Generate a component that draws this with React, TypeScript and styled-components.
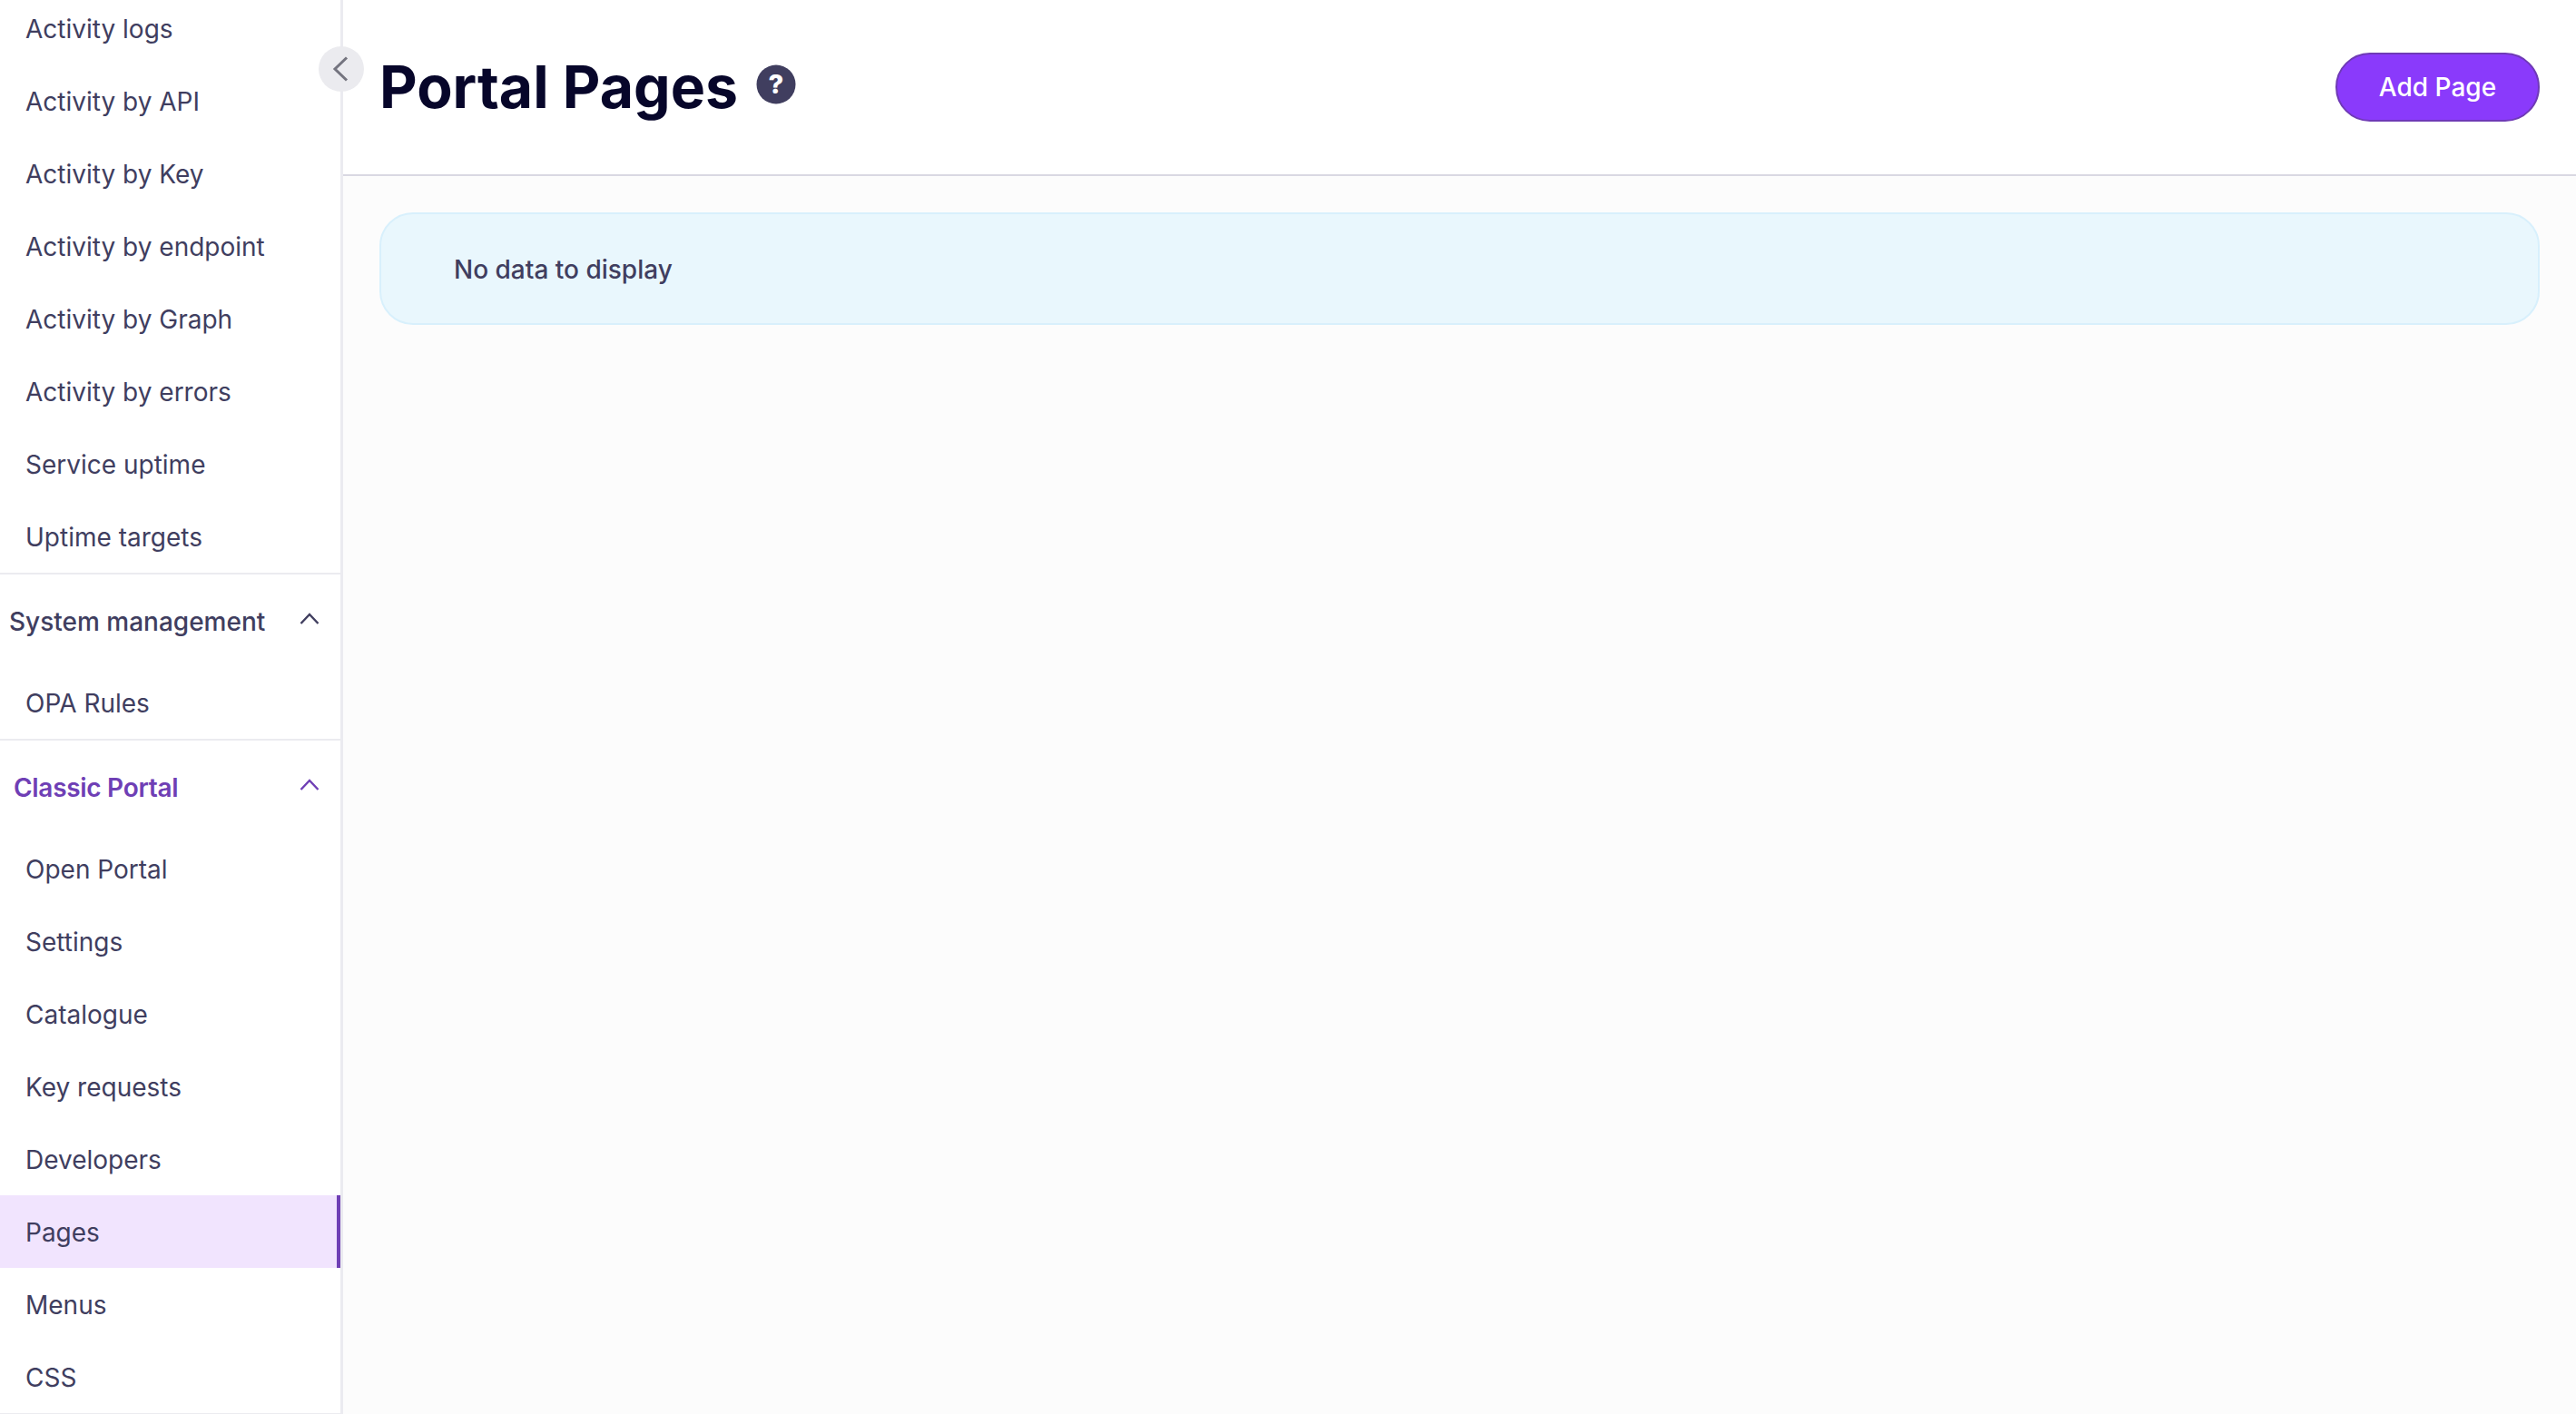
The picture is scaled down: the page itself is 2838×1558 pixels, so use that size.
import React from 'react';
import styled, { createGlobalStyle } from 'styled-components';

const Global = createGlobalStyle`
  html, body { margin: 0; padding: 0; height: 100%; background: #fff; }
  #root { height: 100%; }
  * { box-sizing: border-box; }
`;

const Page = styled.div`
  display: flex;
  width: 100%;
  height: 1558px;
  overflow: hidden;
  font-family: Inter, "Liberation Sans", sans-serif;
  color: #403e5f;
`;

const Sidebar = styled.aside`
  position: relative;
  flex: 0 0 378px;
  height: 100%;
  background: #fff;
  border-right: 3px solid #ebebf0;
`;

const NavScroller = styled.nav`
  height: 100%;
  overflow: hidden;
  border-bottom: 1px solid #ebebf0;
`;

const NavContent = styled.div`
  margin-top: -9px;
`;

const Section = styled.div<{ $divided?: boolean }>`
  border-bottom: ${p => (p.$divided ? '2px solid #ebebf0' : 'none')};
`;

const NavItem = styled.div<{ $active?: boolean }>`
  display: flex;
  align-items: center;
  height: 80px;
  padding: 2px 0 0 28px;
  font-size: 28px;
  font-weight: 400;
  background: ${p => (p.$active ? '#f1e4fe' : 'transparent')};
  border-right: ${p => (p.$active ? '4px solid #6f3fb5' : 'none')};
`;

const SectionHeader = styled.div<{ $accent?: boolean }>`
  display: flex;
  align-items: center;
  justify-content: space-between;
  height: 101px;
  padding: 2px 23px 0 ${p => (p.$accent ? 15 : 10)}px;
  font-size: 28px;
  font-weight: ${p => (p.$accent ? 600 : 500)};
  letter-spacing: ${p => (p.$accent ? '-0.3px' : 'normal')};
  color: ${p => (p.$accent ? '#6f3fb5' : '#403e5f')};
`;

const ChevronIcon = styled.svg`
  display: block;
  margin-top: -6px;
`;

const CollapseButton = styled.button`
  position: absolute;
  top: 51px;
  left: 351px;
  width: 50px;
  height: 50px;
  padding: 0;
  border: none;
  border-radius: 50%;
  background: #ebebef;
  display: flex;
  align-items: center;
  justify-content: center;
`;

const Main = styled.main`
  flex: 1;
  display: flex;
  flex-direction: column;
  min-width: 0;
  background: #fcfcfc;
`;

const Header = styled.header`
  display: flex;
  align-items: center;
  justify-content: space-between;
  height: 194px;
  padding: 0 40px;
  background: #fff;
  border-bottom: 2px solid #d9d8e2;
`;

const TitleGroup = styled.div`
  display: flex;
  align-items: center;
  gap: 20px;
`;

const Title = styled.h1`
  margin: 0;
  font-size: 64.3px;
  font-weight: 700;
  line-height: 1;
  color: #07062a;
`;

const HelpIcon = styled.svg`
  width: 44px;
  height: 44px;
  display: block;
  margin-top: -6px;
`;

const AddButton = styled.button`
  width: 225px;
  height: 76px;
  border: 2px solid #6f3ab6;
  border-radius: 38px;
  background: #8a3afb;
  color: #fff;
  font-family: inherit;
  font-size: 28px;
  font-weight: 500;
`;

const Content = styled.div`
  padding: 40px;
`;

const Alert = styled.div`
  display: flex;
  align-items: center;
  height: 124px;
  padding: 2px 0 0 80px;
  background: #e9f7fd;
  border: 2px solid #d8f0fc;
  border-radius: 37px;
  font-size: 28px;
  font-weight: 500;
  color: #403e5f;
`;

const Chevron: React.FC<{ color: string }> = ({ color }) => (
  <ChevronIcon width="22" height="14" viewBox="0 0 22 14" fill="none">
    <path d="M1.5 12 L11 2 L20.5 12" stroke={color} strokeWidth="2.4" />
  </ChevronIcon>
);

const monitoring = [
  'Activity logs', 'Activity by API', 'Activity by Key', 'Activity by endpoint',
  'Activity by Graph', 'Activity by errors', 'Service uptime', 'Uptime targets',
];
const portal = ['Open Portal', 'Settings', 'Catalogue', 'Key requests', 'Developers', 'Pages', 'Menus', 'CSS'];

export default function App() {
  return (
    <Page>
      <Global />
      <Sidebar>
        <NavScroller>
          <NavContent>
            <Section $divided>
              {monitoring.map(t => <NavItem key={t}>{t}</NavItem>)}
            </Section>
            <Section $divided>
              <SectionHeader>
                System management
                <Chevron color="#403e5f" />
              </SectionHeader>
              <NavItem>OPA Rules</NavItem>
            </Section>
            <Section>
              <SectionHeader $accent>
                Classic Portal
                <Chevron color="#6f3fb5" />
              </SectionHeader>
              {portal.map(t => <NavItem key={t} $active={t === 'Pages'}>{t}</NavItem>)}
            </Section>
          </NavContent>
        </NavScroller>
        <CollapseButton aria-label="Collapse">
          <svg width="20" height="28" viewBox="0 0 20 28" fill="none">
            <path d="M16 1.5 L3 14 L16 26.5" stroke="#74747f" strokeWidth="3" />
          </svg>
        </CollapseButton>
      </Sidebar>
      <Main>
        <Header>
          <TitleGroup>
            <Title>Portal Pages</Title>
            <HelpIcon viewBox="0 0 44 44">
              <circle cx="22" cy="22" r="21.5" fill="#403e5f" />
              <text x="22" y="32" textAnchor="middle" fontFamily="Inter, sans-serif" fontWeight="800" fontSize="29" fill="#fff">?</text>
            </HelpIcon>
          </TitleGroup>
          <AddButton>Add Page</AddButton>
        </Header>
        <Content>
          <Alert>No data to display</Alert>
        </Content>
      </Main>
    </Page>
  );
}
